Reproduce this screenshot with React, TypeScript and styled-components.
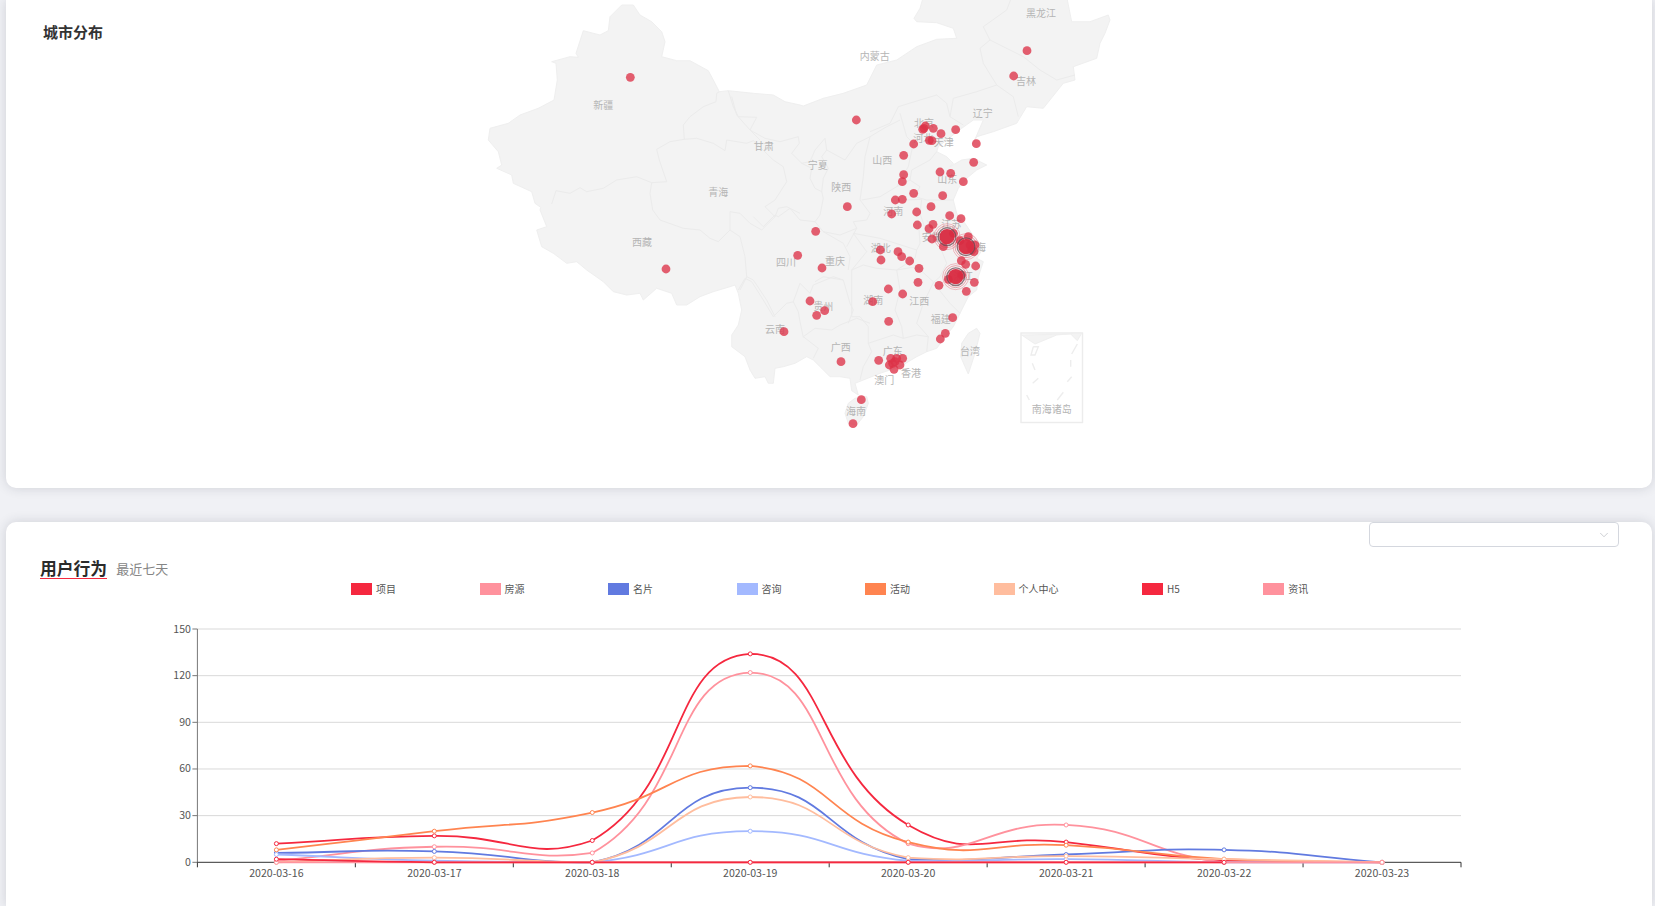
import React from "react";
import styled, { createGlobalStyle } from "styled-components";
import { ChevronDown } from "lucide-react";

const FONT = `"Noto Sans CJK SC", "Noto Sans", "Liberation Sans", sans-serif`;

const Global = createGlobalStyle`
  html, body { margin: 0; padding: 0; height: 100%; background: #f0f1f5; font-family: ${FONT}; }
  #root { height: 100%; }
`;

const Page = styled.div`
  height: 906px;
  overflow: hidden;
  box-sizing: border-box;
  padding: 0 3px 0 6px;
  display: flex;
  flex-direction: column;
  gap: 34px;
  background: #f0f1f5;
`;

const Card = styled.section`
  background: #fff;
  box-shadow: 0 0 12px rgba(40, 44, 60, 0.16);
  flex: none;
`;

const MapCard = styled(Card)`
  height: 488px;
  border-radius: 0 0 10px 10px;
  display: flex;
  align-items: flex-start;
`;

const MapTitle = styled.h2`
  flex: 0 0 474px;
  box-sizing: border-box;
  margin: 0;
  padding: 21px 0 0 37px;
  font-size: 15px;
  line-height: 22px;
  font-weight: 700;
  color: #333;
`;

const MapSvg = styled.svg`
  display: block;
  flex: none;
  width: 660px;
  height: 440px;
`;

const BehaviorCard = styled(Card)`
  height: 384px;
  border-radius: 10px 10px 0 0;
  overflow: hidden;
  display: flex;
  flex-direction: column;
`;

const SelectRow = styled.div`
  display: flex;
  justify-content: flex-end;
  padding-right: 33px;
`;

const SelectBox = styled.div`
  box-sizing: border-box;
  width: 250px;
  height: 25px;
  border: 1px solid #d4d7de;
  border-radius: 4px;
  background: #fff;
  display: flex;
  align-items: center;
  justify-content: flex-end;
  padding-right: 7px;
  color: #a8acb4;
`;

const Heading = styled.div`
  display: flex;
  align-items: center;
  gap: 9px;
  margin-top: 12px;
  padding-left: 34px;
`;

const HeadingMain = styled.h2`
  margin: 0;
  font-size: 16.8px;
  line-height: 19px;
  font-weight: 700;
  color: #2b2b2b;
  border-bottom: 1.5px solid #f5283f;
`;

const HeadingSub = styled.span`
  font-size: 13px;
  line-height: 19px;
  color: #858585;
  margin-top: -1px;
`;

const Legend = styled.div`
  display: flex;
  gap: 83.5px;
  margin-top: 4px;
  padding-left: 345px;
  height: 12px;
`;

const LegendItem = styled.div`
  display: flex;
  align-items: center;
  gap: 4px;
  font-size: 10px;
  line-height: 12px;
  color: #555;
  white-space: nowrap;
`;

const Swatch = styled.i<{ $c: string }>`
  display: block;
  width: 21px;
  height: 12px;
  background: ${(p) => p.$c};
`;

const ChartSvg = styled.svg`
  display: block;
  margin-top: 4px;
  width: 1646px;
  height: 306px;
`;

const Land = styled.path`
  fill: #f3f3f3;
  stroke: #efefef;
  stroke-width: 1;
  stroke-linejoin: round;
`;

const Border = styled.polyline`
  fill: none;
  stroke: #ebebeb;
  stroke-width: 1;
  stroke-linejoin: round;
`;

const Inset = styled.rect`
  fill: #fff;
  stroke: #ececec;
  stroke-width: 1.4;
`;

const InsetIsland = styled.polyline`
  fill: none;
  stroke: #ededed;
  stroke-width: 1.4;
`;

const MapLabel = styled.text`
  font-size: 10px;
  fill: #b5b5b5;
  text-anchor: middle;
  dominant-baseline: central;
`;

const Dot = styled.circle`
  fill: rgba(221, 50, 72, 0.78);
`;

const BigDot = styled.circle`
  fill: rgba(216, 44, 66, 0.96);
`;

const Ripple = styled.circle`
  fill: none;
`;

const GridLine = styled.line`
  stroke: #d9d9d9;
  stroke-width: 1;
`;

const AxisLine = styled.line<{ $c?: string }>`
  stroke: ${(p) => p.$c || "#333"};
  stroke-width: 1;
`;

const Tick = styled.text<{ $a: string }>`
  font-size: 10.6px;
  fill: #555;
  text-anchor: ${(p) => p.$a};
  dominant-baseline: central;
`;

const Series = styled.path<{ $c: string }>`
  fill: none;
  stroke: ${(p) => p.$c};
  stroke-width: 1.8;
`;

const Marker = styled.circle<{ $c: string }>`
  fill: #fff;
  stroke: ${(p) => p.$c};
  stroke-width: 1;
`;

/* ---- map geometry: traced in crops, each crop has its own origin, 3 units per px ---- */
const FR: Record<string, [number, number]> = {
  A: [470, 0],
  B: [780, 0],
  C: [720, 220],
  D: [700, 100],
  E: [700, 260],
};
const tr = (f: string, a: number[]) => {
  const out: string[] = [];
  for (let i = 0; i < a.length; i += 2) {
    out.push(`${(FR[f][0] + a[i] / 3).toFixed(1)},${(FR[f][1] + a[i + 1] / 3).toFixed(1)}`);
  }
  return out;
};
const trOne = (f: string, x: number, y: number): [number, number] => [FR[f][0] + x / 3, FR[f][1] + y / 3];

const mainland = [
  ...tr("A", [455,15,490,15,510,45,545,65,575,95,585,125,575,170,620,182,660,182,715,212,730,240,748,275,775,272,850,280,910,285,945,305,990,315]),
  ...tr("B", [70,318,130,295,190,280,260,255,290,195,350,180,410,140,470,118,530,115,520,85,470,68,410,65,402,55,420,25,430,-10,860,-10,875,65,930,65,985,45,990,60,975,100,960,130,950,175,880,200,885,240,850,250,790,325,740,320,710,370,640,395,590,410,580,430,610,360,580,360,545,385,500,420,475,440,470,455,500,470,520,490,510,500,545,480,580,475,620,495,590,510,560,535,535,565,520,600,530,640,555,670,575,700,590,720]),
  ...tr("C", [790,85,770,115,790,125,775,170,770,210,745,230,720,280,700,320,680,345,650,385,620,395,590,410,540,440,480,460,430,480,405,490,415,525]),
  ...tr("E", [455,392,450,355,420,350,390,350,365,325,340,300,320,290,285,310,250,320,225,325,220,370,205,370,195,350,165,355,150,330,135,290,95,260,95,225,115,195,125,150,115,100,105,75,90,80,40,95]),
  ...tr("A", [690,890,650,915,620,915,605,880,560,865,520,900,510,880,470,885,430,875,400,845,350,810,320,785,290,790,250,760,215,740,200,690,230,680,210,630,212,622,195,610,185,575,130,550,125,525,80,505,95,495,85,455,55,420,60,385,115,370,150,345,205,325,252,300,262,240,258,190,245,185,300,170,325,172,318,160,340,92,390,105,415,92,420,50]),
];
const taiwan = tr("C", [770,325,780,340,765,400,745,462,735,440,722,410,725,370,745,340]);
const hainan = tr("E", [465,415,500,410,505,430,490,470,470,495,445,490,435,460,445,430]);
const nanhaiTop = tr("C", [905,345,945,372,1010,345,1060,340,1085,340,1072,362,1052,342]);
const toPath = (p: string[]) => `M${p.join("L")}Z`;

const borders: [string, number[]][] = [
  ["A", [245,612,258,572,300,580,330,563,350,575,400,565,440,540,500,530,545,548,590,545,578,510,568,480,560,448,600,425,643,418,640,375,660,350,700,320,738,305,740,280,748,275]],
  ["A", [643,418,680,415,730,430,765,452,770,420,830,430,850,422,910,480,940,500,950,545,915,600,885,620,915,650,925,625,950,620,990,640]],
  ["A", [915,650,875,690,840,670,810,640,780,635,780,690,745,725,720,715,690,690,640,685,570,660,548,630,540,580,545,548]],
  ["A", [780,690,810,710,825,770,830,830,810,870]],
  ["A", [830,830,850,840,890,900,915,950]],
  ["A", [775,272,790,320,805,350,860,352,840,390,870,420]],
  ["D", [95,-10,110,45,150,90,195,115,240,125,295,110,298,130,275,160,305,190]],
  ["D", [305,190,335,205,330,235,345,265,365,275,370,235,385,205,365,170,380,150,375,115,345,150,330,185,305,190]],
  ["D", [380,150,435,180,470,130,510,110,560,80,600,60]],
  ["D", [510,110,495,170,490,230,480,300,510,340,500,360,460,365,470,385,440,440]],
  ["D", [365,275,370,295,360,345,345,365,300,360,270,325,235,350,225,345,190,380,160,350]],
  ["D", [345,365,370,395,420,405,470,385]],
  ["D", [370,395,430,430,450,470,445,510]],
  ["B", [355,320,330,370,270,395]],
  ["B", [355,320,420,300,470,285,500,310,510,350,550,375]],
  ["B", [510,350,520,295,590,275,650,255,700,290,715,350]],
  ["B", [650,255,610,190,600,145,630,120,610,80,680,30,695,-10]],
  ["B", [630,120,730,170,780,210,830,240,885,225]],
  ["B", [245,600,300,590,350,560,385,500,400,430,380,410,360,340]],
  ["B", [470,455,450,480,395,510,390,540,420,560,405,590,440,600,520,600]],
  ["B", [350,560,390,540]],
  ["B", [380,600,425,598,420,640,440,700]],
  ["C", [400,40,480,55,590,90,600,70,595,0]],
  ["C", [590,90,585,115,530,150,590,140,640,185]],
  ["C", [620,0,640,30,650,60,700,70,745,85]],
  ["C", [660,80,680,130,660,170,640,188,690,250,720,280]],
  ["C", [640,188,610,250,590,310,625,350,620,395]],
  ["C", [445,370,520,345,550,355,590,345,625,350]],
  ["C", [445,370,455,395,430,440,420,480]],
  ["C", [530,150,540,210,525,270,545,320,550,355]],
  ["C", [395,150,430,135,470,145,530,150]],
  ["C", [395,150,395,290,420,290,445,320,445,370]],
  ["C", [400,40,440,95,395,150]],
  ["E", [310,230,345,205,395,210,420,195,470,175,510,190]],
  ["E", [310,230,355,265,340,295]],
  ["E", [280,125,300,70,330,100,340,75,400,50,430,60,450,130,460,150,445,190]],
  ["E", [280,125,295,155,300,185,310,232]],
  ["E", [115,90,135,55,155,65,190,120,220,170,260,130,282,125]],
  ["E", [345,65,370,50,430,60]],
];

const islands: number[][] = [
  [940,380,955,380,945,405,933,405,940,380],
  [1072,372,1055,402],
  [937,430,945,450],
  [1052,420,1052,440],
  [938,490,955,475],
  [1055,470,1042,485],
  [920,525,928,540],
  [1030,517,1012,540],
];

const labels: [string, string, number, number][] = [
  ["新疆","A",400,313],["甘肃","A",881,435],["青海","A",745,575],["西藏","A",516,723],["四川","A",948,783],
  ["内蒙古","B",284,165],["黑龙江","B",783,37],["吉林","B",738,240],["辽宁","B",608,338],["北京","B",432,366],
  ["河北","B",430,412],["天津","B",491,425],["山西","B",307,478],["宁夏","B",113,492],["陕西","B",184,560],
  ["山东","B",502,535],["河南","B",340,632],["江苏","B",514,670],["安徽","C",635,50],["上海","C",768,78],
  ["浙江","C",730,165],["湖北","C",482,82],["重庆","C",345,122],["贵州","C",310,255],["湖南","C",460,238],
  ["江西","C",598,240],["福建","C",662,295],["云南","C",165,325],["广西","C",362,378],["广东","C",518,390],
  ["台湾","C",750,390],["香港","C",573,458],["澳门","C",493,478],["海南","C",408,570],["南海诸岛","C",995,565],
];

const dots: [string, number, number][] = [
  ["A",481,232],["A",588,807],
  ...([[741,152],[701,228],[229,360],[436,378],[428,388],[432,385],[460,385],[483,401],[527,389],[589,431],[581,487],[401,432],[448,421],[456,422],[371,466],[371,524],[367,545],[480,516],[512,520],[550,545],[401,580],[488,587],[346,600],[367,598],[202,620],[410,636],[453,620],[335,642],[412,675],[509,647],[543,656],[459,673],[447,686]] as number[][]).map((p) => ["B", p[0], p[1]] as [string, number, number]),
  ...([[287,34],[233,106],[306,144],[270,243],[314,272],[290,286],[192,335],[363,425],[476,421],[424,539],[399,611],[458,245],[506,304],[505,207],[548,222],[481,90],[483,120],[534,95],[545,110],[569,123],[597,145],[594,187],[657,196],[698,293],[676,340],[661,357],[739,214],[763,187],[767,138],[737,133],[724,122],[636,57],[670,80],[512,415],[530,415],[548,415],[508,435],[522,448],[540,435],[518,430],[525,425],[700,40],[755,90],[765,75],[745,50],[720,62],[762,95],[750,75],[685,178],[725,165]] as number[][]).map((p) => ["C", p[0], p[1]] as [string, number, number]),
];

const hubs: [number, number][] = [[681, 50], [738, 80], [707, 170]];

/* ---- chart ---- */
const XL = 197.4;
const XR = 1461;
const Y0 = 863.3;
const Y150 = 630;
const STEP = (XR - XL) / 8;
const days = ["2020-03-16","2020-03-17","2020-03-18","2020-03-19","2020-03-20","2020-03-21","2020-03-22","2020-03-23"];
const yOf = (v: number) => Y0 - ((Y0 - Y150) * v) / 150;
const xOf = (i: number) => XL + STEP * (i + 0.5);

const RED = "#f5283f";
const PINK = "#ff929d";
const series: { name: string; color: string; data: number[] }[] = [
  { name: "项目", color: RED, data: [12, 17, 14, 134, 24, 13, 1, 0] },
  { name: "房源", color: PINK, data: [1, 10, 6, 122, 12, 24, 0, 0] },
  { name: "名片", color: "#617ae0", data: [6, 7, 0, 48, 2, 5, 8, 0] },
  { name: "咨询", color: "#a3b9ff", data: [5, 1, 0, 20, 1, 2, 0, 0] },
  { name: "活动", color: "#ff8450", data: [8, 20, 32, 62, 13, 11, 2, 0] },
  { name: "个人中心", color: "#ffbd9e", data: [0, 3, 0, 42, 3, 4, 2, 0] },
  { name: "资讯", color: PINK, data: [0, 0, 0, 0, 0, 0, 0, 0] },
  { name: "H5", color: RED, data: [2, 0, 0, 0, 0, 0, 0] },
];
const legendOrder = ["项目", "房源", "名片", "咨询", "活动", "个人中心", "H5", "资讯"];

// same construction as a smoothed chart line: control points along prev->next, clamped to data range
const smoothPath = (data: number[]) => {
  const pts = data.map((v, i) => [xOf(i), yOf(v)]);
  const minY = Math.min(...pts.map((p) => p[1]));
  const maxY = Math.max(...pts.map((p) => p[1]));
  const clamp = (v: number) => Math.max(minY, Math.min(maxY, v));
  const S = 0.5;
  const ctrl = pts.map((p, i) => {
    const prev = pts[Math.max(i - 1, 0)];
    const next = pts[Math.min(i + 1, pts.length - 1)];
    const vx = (next[0] - prev[0]) * S;
    const vy = (next[1] - prev[1]) * S;
    const d0 = Math.hypot(p[0] - prev[0], p[1] - prev[1]);
    const d1 = Math.hypot(next[0] - p[0], next[1] - p[1]);
    const r = d0 + d1 === 0 ? 0.5 : d1 / (d0 + d1);
    return {
      inn: [p[0] - vx * (1 - r), clamp(p[1] - vy * (1 - r))],
      out: [p[0] + vx * r, clamp(p[1] + vy * r)],
    };
  });
  let d = `M${pts[0][0]},${pts[0][1]}`;
  for (let i = 1; i < pts.length; i++) {
    d += `C${ctrl[i - 1].out[0]},${ctrl[i - 1].out[1]} ${ctrl[i].inn[0]},${ctrl[i].inn[1]} ${pts[i][0]},${pts[i][1]}`;
  }
  return d;
};

export default function App() {
  return (
    <>
      <Global />
      <Page>
        <MapCard>
          <MapTitle>城市分布</MapTitle>
          <MapSvg viewBox="480 0 660 440">
            <Land d={toPath(mainland)} />
            <Land d={toPath(taiwan)} />
            <Land d={toPath(hainan)} />
            {borders.map(([f, a], i) => (
              <Border key={i} points={tr(f, a).join(" ")} />
            ))}
            <Inset x={1021} y={333} width={61.5} height={89.5} />
            <Land d={toPath(nanhaiTop)} />
            {islands.map((a, i) => (
              <InsetIsland key={i} points={tr("C", a).join(" ")} />
            ))}
            {labels.map(([t, f, x, y]) => {
              const [px, py] = trOne(f, x, y);
              return (
                <MapLabel key={t} x={px} y={py}>
                  {t}
                </MapLabel>
              );
            })}
            {dots.map(([f, x, y], i) => {
              const [px, py] = trOne(f, x, y);
              return <Dot key={i} cx={px} cy={py} r={4.4} />;
            })}
            {hubs.map(([x, y], i) => {
              const [px, py] = trOne("C", x, y);
              return (
                <g key={i}>
                  <Ripple cx={px} cy={py} r={13} stroke="rgba(221,48,70,0.3)" strokeWidth={1} />
                  <Ripple cx={px} cy={py} r={11} stroke="rgba(221,48,70,0.42)" strokeWidth={1} />
                  <Ripple cx={px} cy={py} r={8.8} stroke="rgba(110,70,80,0.75)" strokeWidth={1.4} />
                  <BigDot cx={px} cy={py} r={7.6} />
                </g>
              );
            })}
          </MapSvg>
        </MapCard>

        <BehaviorCard>
          <SelectRow>
            <SelectBox>
              <ChevronDown size={14} strokeWidth={1} />
            </SelectBox>
          </SelectRow>
          <Heading>
            <HeadingMain>用户行为</HeadingMain>
            <HeadingSub>最近七天</HeadingSub>
          </Heading>
          <Legend>
            {legendOrder.map((n) => {
              const s = series.find((x) => x.name === n)!;
              return (
                <LegendItem key={n}>
                  <Swatch $c={s.color} />
                  {n}
                </LegendItem>
              );
            })}
          </Legend>
          <ChartSvg viewBox="6 600 1646 306">
            {[0, 30, 60, 90, 120, 150].map((v) => (
              <g key={v}>
                {v > 0 && <GridLine x1={XL} x2={XR} y1={yOf(v)} y2={yOf(v)} />}
                <AxisLine $c="#777" x1={XL - 5} x2={XL} y1={yOf(v)} y2={yOf(v)} />
                <Tick $a="end" x={XL - 6.5} y={yOf(v) - 1}>
                  {v}
                </Tick>
              </g>
            ))}
            <AxisLine $c="#777" x1={XL} x2={XL} y1={Y150} y2={Y0} />
            <AxisLine x1={XL} x2={XR} y1={Y0} y2={Y0} />
            {Array.from({ length: 9 }, (_, i) => (
              <AxisLine key={i} x1={XL + STEP * i} x2={XL + STEP * i} y1={Y0} y2={Y0 + 5} />
            ))}
            {days.map((d, i) => (
              <Tick key={d} $a="middle" x={xOf(i)} y={873}>
                {d}
              </Tick>
            ))}
            {series.map((s) => (
              <g key={s.name}>
                <Series $c={s.color} d={smoothPath(s.data)} />
                {s.data.map((v, i) => (
                  <Marker key={i} $c={s.color} cx={xOf(i)} cy={yOf(v)} r={2} />
                ))}
              </g>
            ))}
          </ChartSvg>
        </BehaviorCard>
      </Page>
    </>
  );
}
